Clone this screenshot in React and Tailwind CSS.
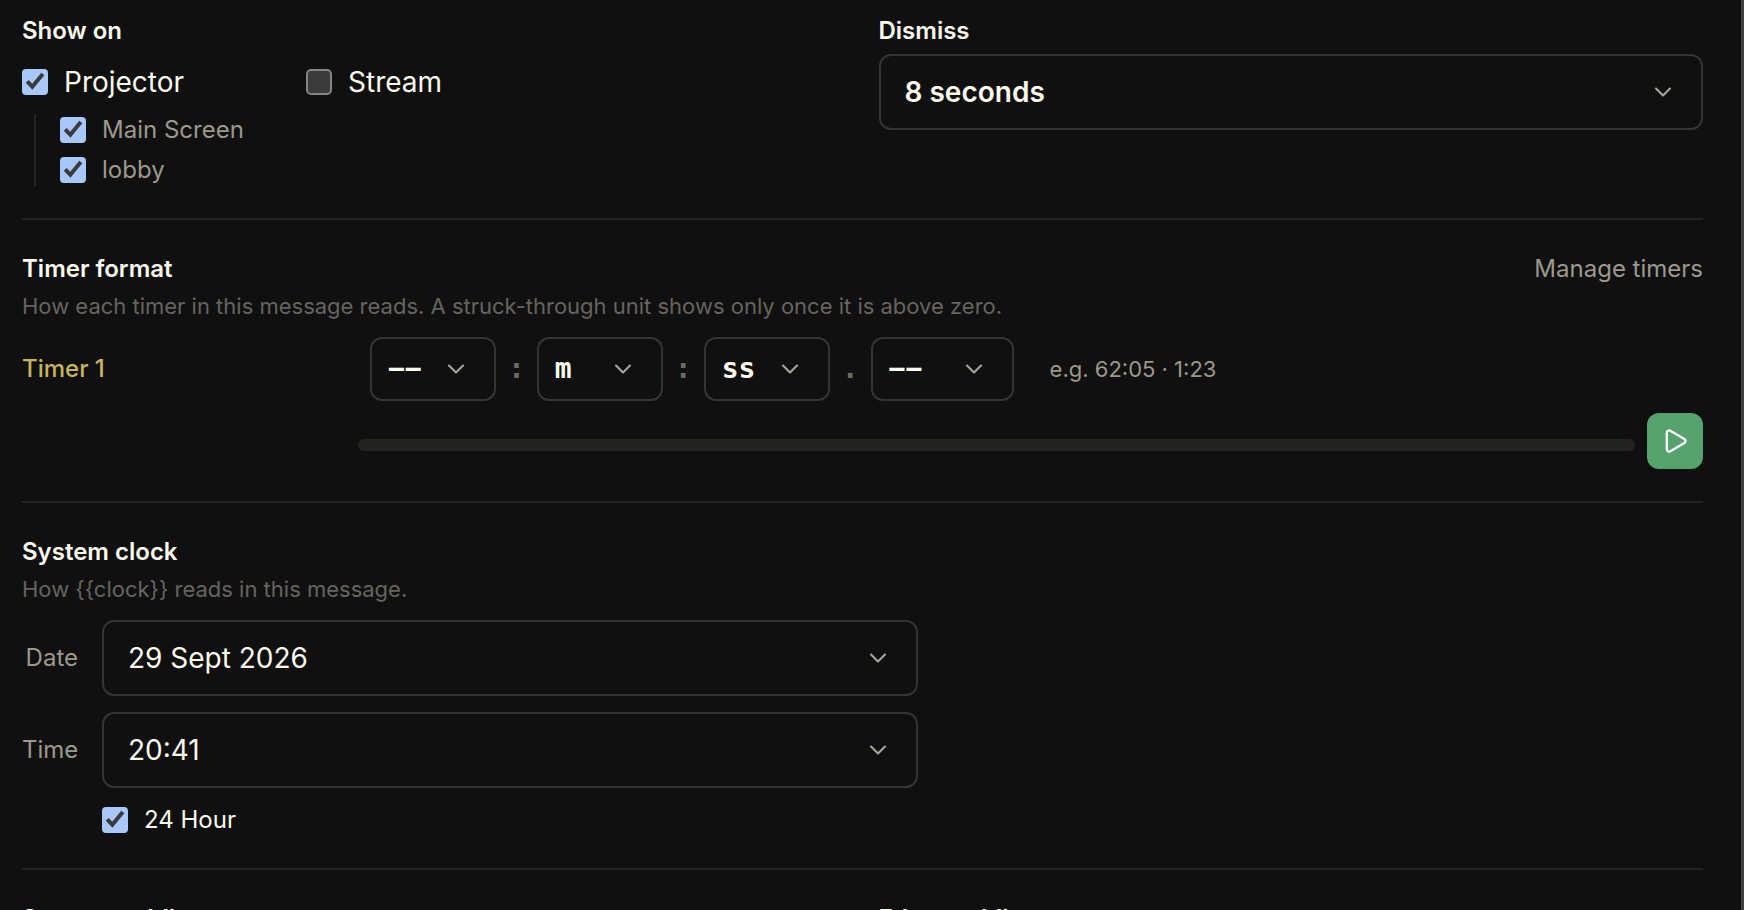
import { useState } from 'react';
import { ChevronDown, Play } from 'lucide-react';

const Checkbox = ({ id, label, defaultChecked = false, className }) => {
  const [checked, setChecked] = useState(defaultChecked);

  return (
    <div className="flex items-center gap-4">
      <span className="grid shrink-0">
        <input
          id={id}
          type="checkbox"
          checked={checked}
          onChange={(e) => setChecked(e.target.checked)}
          className="col-start-1 row-start-1 size-[26px] appearance-none rounded-[5px] border-2 border-[#858585] bg-[#3b3b3b] checked:rounded-[4px] checked:border-[#a8c7fa] checked:bg-[#a8c7fa]"
        />
        {checked && (
          <svg viewBox="0 0 26 26" className="pointer-events-none col-start-1 row-start-1 size-[26px]" aria-hidden="true">
            <path d="M5.2 12.4 10.3 17.7 20.8 5" fill="none" stroke="#3b3b3b" strokeWidth="4" />
          </svg>
        )}
      </span>
      <label htmlFor={id} className={className}>{label}</label>
    </div>
  );
};

const Select = ({ id, options, className, ...rest }) => (
  <div className="relative">
    <select
      id={id}
      {...rest}
      className={`w-full appearance-none rounded-xl border-2 border-[#343432] bg-[#101010] text-[28px] ${className}`}
    >
      {options.map((option) => (
        <option key={option}>{option}</option>
      ))}
    </select>
    <ChevronDown
      size={28}
      strokeWidth={1.8}
      className="pointer-events-none absolute inset-y-0 right-[26px] my-auto text-[#a9a79c]"
    />
  </div>
);

const timerUnits = [
  { label: 'Hours', options: ['−−', 'h', 'hh'], separator: ':', width: 'w-[126px]' },
  { label: 'Minutes', options: ['m', 'mm', '−−'], separator: ':', width: 'w-[126px]' },
  { label: 'Seconds', options: ['ss', 's', '−−'], separator: '.', width: 'w-[126px]' },
  { label: 'Fraction', options: ['−−', 'f', 'ff'], separator: null, width: 'w-[143px]' },
];

const monoFont = "font-['DejaVu_Sans_Mono',monospace]";

const App = () => {
  return (
    <div className="flex h-screen overflow-hidden bg-[#101010] font-['Inter',sans-serif] text-[24px] leading-8 text-[#fbf9ec]">
      <main className="min-w-0 flex-1 pr-[38px] pl-[22px]">
        <section className="grid grid-cols-2 gap-8 border-b-2 border-[#232323] pt-[15px] pb-8">
          <div>
            <h2 className="font-semibold">Show on</h2>
            <div className="mt-[15px] flex">
              <div className="w-[284px]">
                <div className="flex h-10 items-center">
                  <Checkbox id="projector" label="Projector" defaultChecked className="text-[28px]" />
                </div>
                <div className="mt-3 ml-3 flex flex-col gap-2 border-l-2 border-[#232323] pl-6 text-[#9c998c]">
                  <Checkbox id="main-screen" label="Main Screen" defaultChecked />
                  <Checkbox id="lobby" label="lobby" defaultChecked />
                </div>
              </div>
              <div className="flex h-10 items-center">
                <Checkbox id="stream" label="Stream" className="text-[28px]" />
              </div>
            </div>
          </div>
          <div>
            <label htmlFor="dismiss" className="block font-semibold">Dismiss</label>
            <div className="mt-[7px]">
              <Select id="dismiss" options={['8 seconds', '15 seconds', '30 seconds', 'Never']} className="h-[76px] px-6 font-semibold" />
            </div>
          </div>
        </section>

        <section className="border-b-2 border-[#232323] pt-[33px] pb-8">
          <div className="flex justify-between">
            <h2 className="font-semibold">Timer format</h2>
            <a href="#timers" className="text-[#9c998c]">Manage timers</a>
          </div>
          <p className="mt-[7px] text-[22px] leading-7 text-[#66645e]">
            How each timer in this message reads. A struck-through unit shows only once it is above zero.
          </p>
          <div className="mt-[17px] flex items-center">
            <h3 className="w-[348px] shrink-0 font-medium text-[#c6b55f]">Timer 1</h3>
            <div className="flex items-center gap-3">
              {timerUnits.map((unit) => (
                <div key={unit.label} className="flex items-center gap-3">
                  <div className={unit.width}>
                    <Select
                      aria-label={unit.label}
                      options={unit.options}
                      className={`h-16 px-4 font-bold ${monoFont}`}
                    />
                  </div>
                  {unit.separator && (
                    <span className={`text-[28px] font-bold text-[#6b6963] ${monoFont}`}>{unit.separator}</span>
                  )}
                </div>
              ))}
            </div>
            <span className="ml-9 text-[22px] text-[#9c998c]">e.g. 62:05 · 1:23</span>
          </div>
          <div className="mt-3 flex items-center gap-3 pl-[336px]">
            <div role="progressbar" aria-label="Timer 1 progress" aria-valuenow={0} className="mt-2 h-3 flex-1 rounded-full bg-[#232321]" />
            <button aria-label="Start Timer 1" className="grid size-14 place-items-center rounded-xl bg-[#56a26f] text-white">
              <Play size={28} strokeWidth={2} />
            </button>
          </div>
        </section>

        <section className="border-b-2 border-[#232323] pt-[33px] pb-8">
          <h2 className="font-semibold">System clock</h2>
          <p className="mt-[7px] text-[22px] leading-7 text-[#66645e]">
            {'How {{clock}} reads in this message.'}
          </p>
          <div className="mt-[17px] grid max-w-4xl grid-cols-[56px_1fr] items-center gap-x-6 gap-y-4">
            <label htmlFor="date" className="text-right text-[#9c998c]">Date</label>
            <Select id="date" options={['29 Sept 2026', '29/09/2026', 'None']} className="h-[76px] px-6" />
            <label htmlFor="time" className="text-right text-[#9c998c]">Time</label>
            <Select id="time" options={['20:41', '20:41:07', 'None']} className="h-[76px] px-6" />
            <div className="col-start-2">
              <Checkbox id="hour24" label="24 Hour" defaultChecked />
            </div>
          </div>
        </section>

        <section className="grid grid-cols-2 gap-8 pt-[33px] pb-8">
          <h2 className="font-semibold">Screen padding</h2>
          <h2 className="font-semibold">Edge padding</h2>
        </section>
      </main>
      <div className="w-[3px] shrink-0 bg-[#3f3f3e]" />
    </div>
  );
};

export default App;
